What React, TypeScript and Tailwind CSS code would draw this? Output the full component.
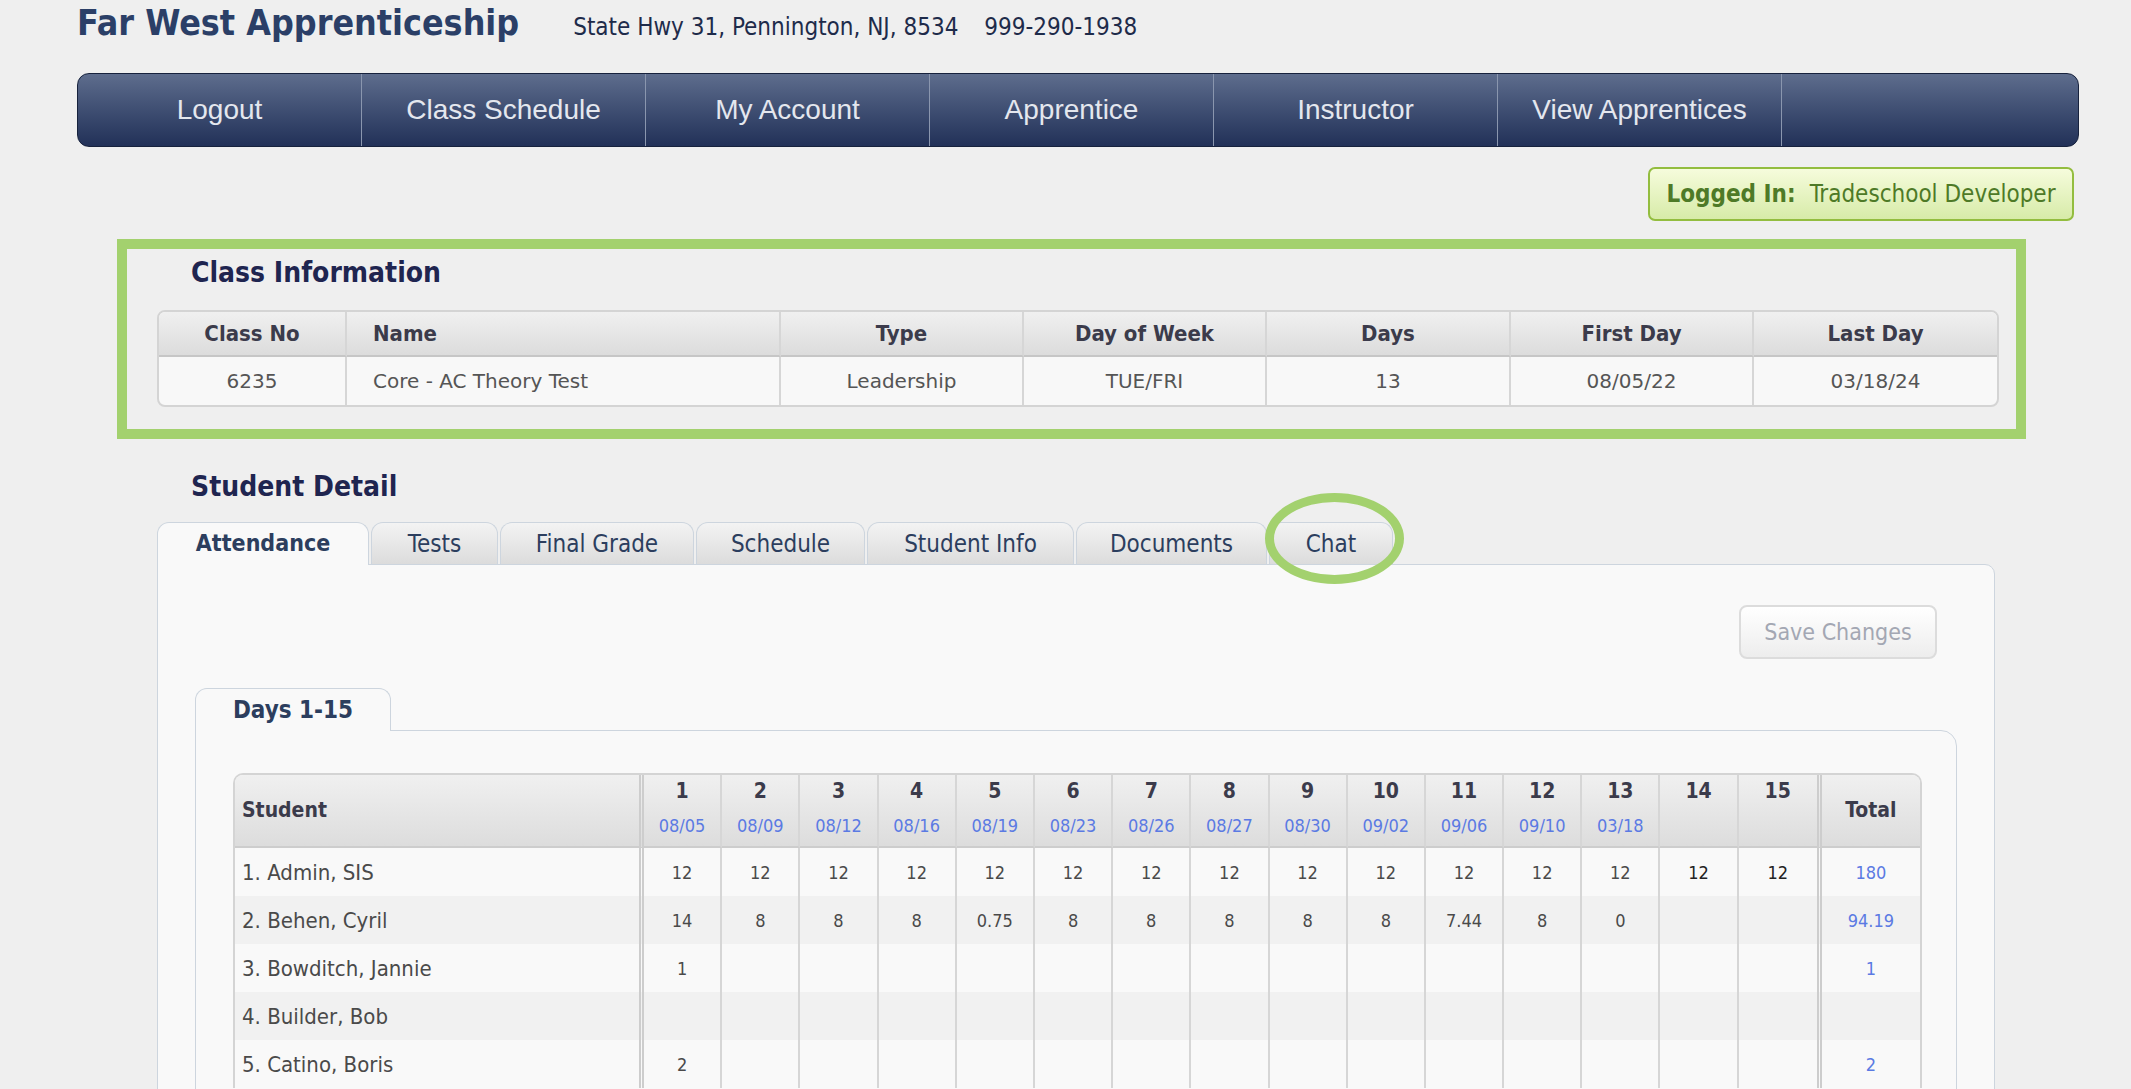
import React from 'react';

const sans = "font-['DejaVu_Sans_Condensed','DejaVu_Sans',sans-serif]";
const wide = "font-['DejaVu_Sans',sans-serif]";

const navItems = ['Logout', 'Class Schedule', 'My Account', 'Apprentice', 'Instructor', 'View Apprentices'];

const classCols = [
    { label: 'Class No', value: '6235', w: 'w-[188px]', left: false },
    { label: 'Name', value: 'Core - AC Theory Test', w: 'w-[434px]', left: true },
    { label: 'Type', value: 'Leadership', w: 'w-[243px]', left: false },
    { label: 'Day of Week', value: 'TUE/FRI', w: 'w-[243px]', left: false },
    { label: 'Days', value: '13', w: 'w-[244px]', left: false },
    { label: 'First Day', value: '08/05/22', w: 'w-[243px]', left: false },
    { label: 'Last Day', value: '03/18/24', w: '', left: false },
];

const tabs = [
    { label: 'Attendance', w: 'w-[212px]' },
    { label: 'Tests', w: 'w-[127px]' },
    { label: 'Final Grade', w: 'w-[194px]' },
    { label: 'Schedule', w: 'w-[169px]' },
    { label: 'Student Info', w: 'w-[207px]' },
    { label: 'Documents', w: 'w-[191px]' },
    { label: 'Chat', w: 'w-[124px]' },
];

const dates = ['08/05', '08/09', '08/12', '08/16', '08/19', '08/23', '08/26', '08/27', '08/30', '09/02', '09/06', '09/10', '03/18', '', ''];

const blank = (first: string[]) => [...first, ...Array(15 - first.length).fill('')];

const students = [
    { name: '1. Admin, SIS', hours: Array(15).fill('12'), total: '180' },
    { name: '2. Behen, Cyril', hours: ['14', '8', '8', '8', '0.75', '8', '8', '8', '8', '8', '7.44', '8', '0', '', ''], total: '94.19' },
    { name: '3. Bowditch, Jannie', hours: blank(['1']), total: '1' },
    { name: '4. Builder, Bob', hours: blank([]), total: '' },
    { name: '5. Catino, Boris', hours: blank(['2']), total: '2' },
];

const ClassInformation: React.FC = () => (
    <section className="ml-[40px] mr-[53px] mt-[18px] border-[10px] border-[#a3d16e] pl-[30px] pr-[17px] pt-[10px] pb-[22px]">
        <h2 className="pl-[34px] text-[28px] leading-[28px] font-bold text-[#1f2550]">Class Information</h2>
        <div className="mt-[23px] overflow-hidden rounded-[8px] border-2 border-[#d4d4d4] bg-[#f8f8f8]">
            <table className="w-full table-fixed border-separate border-spacing-0">
                <colgroup>
                    {classCols.map(c => (
                        <col key={c.label} className={c.w} />
                    ))}
                </colgroup>
                <thead>
                    <tr>
                        {classCols.map((c, i) => (
                            <th
                                key={c.label}
                                className={`h-[45px] border-b-2 border-[#c6c6c6] bg-linear-to-b from-[#f0f0f0] to-[#dcdcdc] text-[22px] font-bold text-[#3b3b4b] ${c.left ? 'pl-[26px] text-left' : 'text-center'} ${i < classCols.length - 1 ? 'border-r-2 border-r-[#d6d6d6]' : ''}`}
                            >
                                {c.label}
                            </th>
                        ))}
                    </tr>
                </thead>
                <tbody>
                    <tr>
                        {classCols.map((c, i) => (
                            <td
                                key={c.label}
                                className={`h-[48px] ${wide} text-[20px] text-[#555555] ${c.left ? 'pl-[26px] text-left' : 'text-center'} ${i < classCols.length - 1 ? 'border-r-2 border-[#d6d6d6]' : ''}`}
                            >
                                {c.value}
                            </td>
                        ))}
                    </tr>
                </tbody>
            </table>
        </div>
    </section>
);

const AttendanceTable: React.FC = () => (
    <div className="overflow-hidden rounded-t-[10px] border-2 border-b-0 border-[#d4d4d4]">
        <table className="w-full table-fixed border-separate border-spacing-0">
            <colgroup>
                <col className="w-[409px]" />
                {dates.map((_, i) => (
                    <col key={i} className="w-[78.2px]" />
                ))}
                <col />
            </colgroup>
            <thead>
                <tr className="bg-linear-to-b from-[#f0f0f0] to-[#dcdcdc]">
                    <th className="h-[73px] border-b-2 border-r-[5px] border-double border-[#cdcdcd] pl-[7px] text-left text-[21px] font-bold text-[#3b3b4b]">
                        Student
                    </th>
                    {dates.map((d, i) => (
                        <th
                            key={i}
                            className={`h-[73px] border-b-2 border-[#cdcdcd] pt-[6px] align-top ${i < 14 ? 'border-r-2 border-r-[#d6d6d6]' : ''}`}
                        >
                            <div className="text-[21px] leading-[21px] font-bold text-[#3b3b4b]">{i + 1}</div>
                            <div className="mt-[15px] h-[18px] text-[18px] leading-[18px] font-normal text-[#5b7ae3]">{d}</div>
                        </th>
                    ))}
                    <th className="h-[73px] border-b-2 border-l-[5px] border-double border-[#cdcdcd] text-center text-[21px] font-bold text-[#3b3b4b]">
                        Total
                    </th>
                </tr>
            </thead>
            <tbody>
                {students.map((s, r) => (
                    <tr key={s.name} className={r % 2 === 0 ? 'bg-[#f9f9f9]' : 'bg-[#f1f1f1]'}>
                        <td className="h-[48px] border-r-[5px] border-double border-[#cdcdcd] pl-[7px] text-[22px] text-[#4a4a4a]">
                            {s.name}
                        </td>
                        {s.hours.map((h, i) => (
                            <td
                                key={i}
                                className={`h-[48px] text-center text-[18px] ${i >= 13 ? 'text-[#222222]' : 'text-[#4a4a4a]'} ${i < 14 ? 'border-r-2 border-[#d6d6d6]' : ''}`}
                            >
                                {h}
                            </td>
                        ))}
                        <td className="h-[48px] border-l-[5px] border-double border-[#cdcdcd] text-center text-[18px] text-[#5b7ae3]">
                            {s.total}
                        </td>
                    </tr>
                ))}
            </tbody>
        </table>
    </div>
);

const StudentDetail: React.FC = () => (
    <section className="ml-[80px] mr-[84px]">
        <h2 className="mt-[34px] pl-[34px] text-[28px] leading-[28px] font-bold text-[#1f2550]">Student Detail</h2>

        <div className="relative mt-[21px] flex items-end gap-[2px]">
            {tabs.map((t, i) =>
                i === 0 ? (
                    <div
                        key={t.label}
                        className={`${t.w} relative z-10 -mb-px flex h-[43px] items-center justify-center rounded-t-[12px] border border-b-0 border-[#cdd5de] bg-[#f9f9f9] pb-px text-[23px] font-bold text-[#2c3e5e]`}
                    >
                        {t.label}
                    </div>
                ) : (
                    <div
                        key={t.label}
                        className={`${t.w} flex h-[42px] items-center justify-center rounded-t-[12px] border border-b-0 border-[#cdd5de] bg-linear-to-b from-[#f3f3f3] to-[#dcdcdc] text-[24px] text-[#2c3e5e]`}
                    >
                        {t.label}
                    </div>
                )
            )}
            {/* highlight ring round the Chat tab */}
            <div className="pointer-events-none absolute left-[1108px] top-[-29px] z-20 h-[91px] w-[139px] rounded-[50%] border-[9px] border-[#a3d16e]" />
        </div>

        <div className="rounded-tr-[10px] border border-[#cdd5de] bg-[#f9f9f9] pb-[60px] pt-[40px]">
            <div className="flex justify-end pr-[57px]">
                <button className="h-[54px] w-[198px] rounded-[8px] border-2 border-[#dcdcdc] bg-linear-to-b from-white via-[#f6f6f6] to-[#ededed] text-[23px] text-[#a3a7b3]">
                    Save Changes
                </button>
            </div>

            <div className="ml-[37px] mr-[37px] mt-[29px]">
                <div className="relative z-10 -mb-px flex h-[43px] w-[196px] items-center justify-center rounded-t-[12px] border border-b-0 border-[#cdd5de] bg-[#f9f9f9] pb-px text-[24px] font-bold text-[#2c3e5e]">
                    Days 1-15
                </div>
                <div className="rounded-tr-[16px] border border-[#cdd5de] pb-[60px] pl-[37px] pr-[34px] pt-[42px]">
                    <AttendanceTable />
                </div>
            </div>
        </div>
    </section>
);

const App: React.FC = () => {
    return (
        <div className={`h-[1089px] overflow-hidden bg-[#efefef] ${sans}`}>
            <div className="pl-[77px] pr-[52px]">
                <header className="flex h-[73px] items-baseline pt-[5px]">
                    <h1 className="text-[35.5px] leading-[36px] font-bold text-[#2b3f67]">Far West Apprenticeship</h1>
                    <span className="ml-[54px] text-[24px] text-[#1e2b4a]">State Hwy 31, Pennington, NJ, 8534</span>
                    <span className="ml-[26px] text-[24px] text-[#1e2b4a]">999-290-1938</span>
                </header>

                <nav className="flex h-[74px] overflow-hidden rounded-[12px] border border-[#17223d] bg-linear-to-b from-[#5e6d8d] to-[#223158]">
                    {navItems.map(item => (
                        <a
                            key={item}
                            href="#"
                            className="flex w-[284px] items-center justify-center border-r border-[#8a96ae] font-['Liberation_Sans',Arial,sans-serif] text-[28px] text-[#e4e7ee]"
                        >
                            {item}
                        </a>
                    ))}
                    <div className="flex-1" />
                </nav>

                <div className="mr-[5px] mt-[20px] flex justify-end">
                    <div className="flex h-[54px] w-[426px] items-center justify-center rounded-[7px] border-2 border-[#93bd3f] bg-linear-to-b from-[#f6fcdc] to-[#d7eba8] text-[24px] text-[#4e7a27]">
                        <span className="font-bold">Logged In:</span>
                        <span className="ml-[14px]">Tradeschool Developer</span>
                    </div>
                </div>

                <ClassInformation />
            </div>
            <div className="pl-[77px] pr-[52px]">
                <StudentDetail />
            </div>
        </div>
    );
};

export default App;
